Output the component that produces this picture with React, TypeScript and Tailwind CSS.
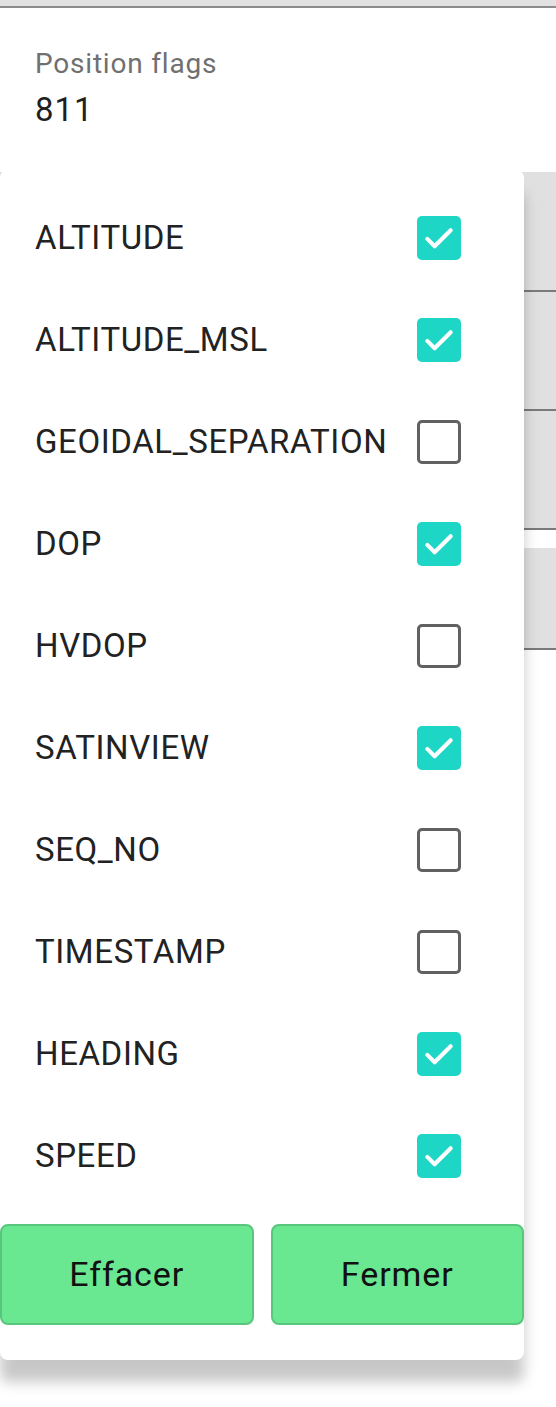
import React from "react";

const items: [string, boolean][] = [
  ["ALTITUDE", true],
  ["ALTITUDE_MSL", true],
  ["GEOIDAL_SEPARATION", false],
  ["DOP", true],
  ["HVDOP", false],
  ["SATINVIEW", true],
  ["SEQ_NO", false],
  ["TIMESTAMP", false],
  ["HEADING", true],
  ["SPEED", true],
];

function Box({ checked }: { checked: boolean }) {
  if (checked) {
    return (
      <div className="w-[44px] h-[44px] rounded-[5px] bg-[#1dd6c6] flex items-center justify-center">
        <svg width="36" height="36" viewBox="0 0 24 24" fill="none">
          <path d="M4.2 12.6l4.9 4.9L19.8 6.8" stroke="white" strokeWidth="2.7" strokeLinecap="round" strokeLinejoin="round" />
        </svg>
      </div>
    );
  }
  return <div className="w-[44px] h-[44px] rounded-[5px] border-[3px] border-[#616161] bg-white" />;
}

export default function App() {
  return (
    <div className="relative w-[556px] h-[1407px] bg-white overflow-hidden" style={{ fontFamily: "Roboto, 'Noto Sans', sans-serif" }}>
      <div className="h-[8px] bg-[#e2e2e2] border-b-2 border-[#8c8c8c]" />
      <div className="h-[164px] pl-[35px] pt-[40px]">
        <div className="text-[28px] leading-[32px] text-[#707070] tracking-[0.8px]">Position flags</div>
        <div className="text-[33px] leading-[40px] text-[#1f1f1f] mt-[10px] tracking-[1px]">811</div>
      </div>
      <div className="flex flex-col">
        <div className="h-[120px] bg-[#e0e0e0] border-b-2 border-[#7a7a7a]" />
        <div className="h-[119px] bg-[#e0e0e0] border-b-2 border-[#7a7a7a]" />
        <div className="h-[119px] bg-[#e0e0e0] border-b-2 border-[#7a7a7a]" />
        <div className="h-[18px] bg-white" />
        <div className="h-[102px] bg-[#e0e0e0] border-b-2 border-[#7a7a7a]" />
      </div>

      <div className="absolute left-0 top-[170px] w-[524px] h-[1190px] bg-white rounded-[8px] shadow-[0_22px_14px_rgba(0,0,0,0.22)] pt-[17px] flex flex-col">
        {items.map(([label, checked]) => (
          <div key={label} className="h-[102px] flex items-center justify-between pl-[35px] pr-[63px]">
            <span className="text-[33px] text-[#222222] tracking-[0.6px]">{label}</span>
            <Box checked={checked} />
          </div>
        ))}
        <div className="flex gap-[17px] mt-[17px]">
          <button className="flex-1 h-[101px] rounded-[8px] bg-[#69e891] border-2 border-[#58c67c] text-[34px] text-[#111111] tracking-[0.9px]">Effacer</button>
          <button className="flex-1 h-[101px] rounded-[8px] bg-[#69e891] border-2 border-[#58c67c] text-[34px] text-[#111111] tracking-[0.9px]">Fermer</button>
        </div>
      </div>
    </div>
  );
}
